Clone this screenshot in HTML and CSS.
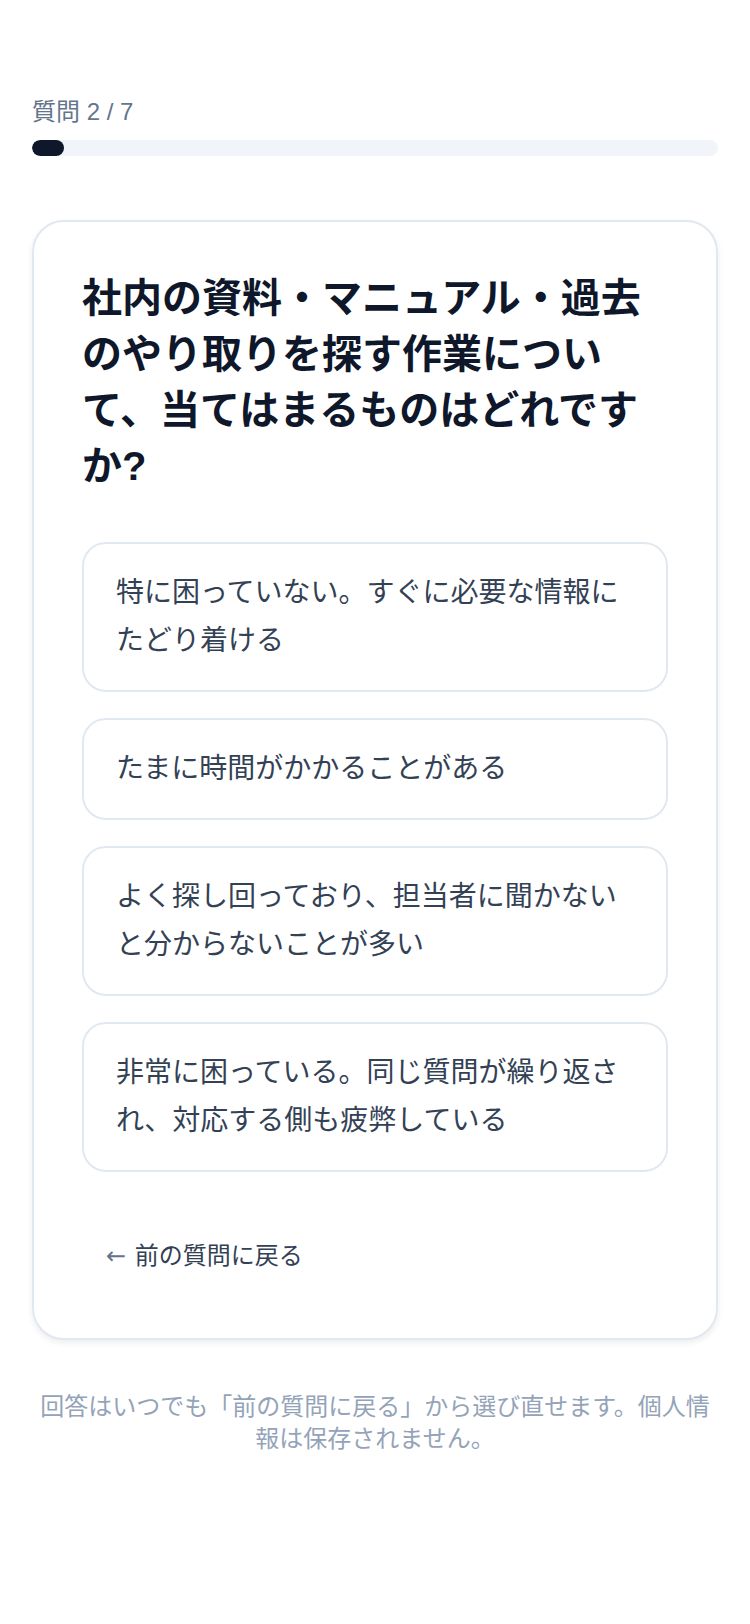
FILE: index.html
```html
<!DOCTYPE html>
<html lang="ja">
<head>
<meta charset="utf-8">
<title>質問 2 / 7</title>
<link rel="stylesheet" href="styles.css">
</head>
<body>
<main class="page">
  <div class="progress">
    <div class="progress-label">質問 2 / 7</div>
    <div class="progress-track"><div class="progress-fill"></div></div>
  </div>

  <section class="card">
    <h1 class="question">社内の資料・マニュアル・過去のやり取りを探す作業について、当てはまるものはどれですか?</h1>
    <div class="options">
      <button class="option">特に困っていない。すぐに必要な情報にたどり着ける</button>
      <button class="option">たまに時間がかかることがある</button>
      <button class="option">よく探し回っており、担当者に聞かないと分からないことが多い</button>
      <button class="option">非常に困っている。同じ質問が繰り返され、対応する側も疲弊している</button>
    </div>
    <div class="back-row">
      <button class="back"><span class="arrow">←</span> 前の質問に戻る</button>
    </div>
  </section>

  <p class="note">回答はいつでも「前の質問に戻る」から選び直せます。個人情報は保存されません。</p>
</main>
</body>
</html>
```

FILE: styles.css
```css
* { box-sizing: border-box; }

html, body {
  margin: 0;
  padding: 0;
  background: #ffffff;
}

body {
  font-family: "Liberation Sans", "Noto Sans CJK JP", sans-serif;
  color: #0f172a;
}

.page {
  padding: 96px 32px 80px;
}

.progress-label {
  font-size: 24px;
  line-height: 32px;
  color: #64748b;
}

.progress-track {
  margin-top: 12px;
  height: 16px;
  border-radius: 999px;
  background: #f1f5f9;
  overflow: hidden;
}

.progress-fill {
  width: 32px;
  height: 100%;
  border-radius: 999px;
  background: #0f172a;
}

.card {
  margin-top: 64px;
  border: 2px solid #e2e8f0;
  border-radius: 32px;
  background: #ffffff;
  padding: 48px;
  box-shadow: 0 3px 6px rgba(15, 23, 42, 0.08);
}

.question {
  margin: 0;
  font-size: 40px;
  line-height: 56px;
  font-weight: 700;
  color: #0f172a;
}

.options {
  margin-top: 48px;
  display: flex;
  flex-direction: column;
  gap: 26px;
}

.option {
  display: block;
  width: 100%;
  text-align: left;
  font-family: inherit;
  font-size: 28px;
  line-height: 48px;
  color: #334155;
  background: #ffffff;
  border: 2px solid #e2e8f0;
  border-radius: 24px;
  padding: 25px 32px;
  cursor: pointer;
}

.back-row {
  margin-top: 50px;
}

.back {
  font-family: inherit;
  font-size: 24px;
  line-height: 32px;
  color: #334155;
  background: transparent;
  border: none;
  padding: 18px 24px;
  cursor: pointer;
}

.arrow {
  font-family: "DejaVu Sans", sans-serif;
  color: #64748b;
  margin-right: 2px;
}

.note {
  margin: 51px 0 0;
  text-align: center;
  font-size: 24px;
  line-height: 32px;
  color: #94a3b8;
}
```
